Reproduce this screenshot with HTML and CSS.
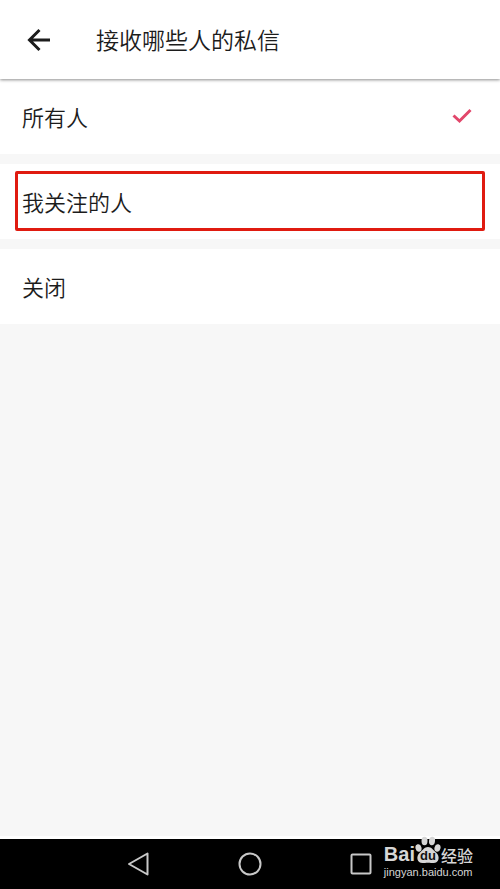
FILE: index.html
```html
<!DOCTYPE html>
<html lang="zh-CN">
<head>
<meta charset="utf-8">
<meta name="viewport" content="width=device-width, initial-scale=1">
<title>接收哪些人的私信</title>
<link rel="stylesheet" href="styles.css">
</head>
<body>
<header class="bar">
  <button class="back" type="button" aria-label="返回">
    <svg width="24" height="24" viewBox="0 0 24 24"><path d="M23 12H3M12.500 2L2.500 12l10 10" /></svg>
  </button>
  <h1 class="title">接收哪些人的私信</h1>
</header>
<main class="options">
  <label class="row"><input class="choice" type="radio" name="who" checked><span>所有人</span>
    <svg class="tick" width="20" height="16" viewBox="0 0 20 16"><path d="M1.500 7.500l6 5.500L18.500 2" /></svg>
  </label>
  <label class="row marked"><input class="choice" type="radio" name="who"><span>我关注的人</span></label>
  <label class="row"><input class="choice" type="radio" name="who"><span>关闭</span></label>
</main>
<footer class="nav">
  <button class="key" type="button" aria-label="后退">
    <svg width="24" height="24" viewBox="0 0 24 24"><path d="M20.500 1.500v21L2 12z" /></svg>
  </button>
  <button class="key" type="button" aria-label="主页">
    <svg width="24" height="24" viewBox="0 0 24 24"><circle cx="12" cy="12" r="10.500" /></svg>
  </button>
  <button class="key" type="button" aria-label="最近任务">
    <svg width="24" height="24" viewBox="0 0 24 24"><rect x="2.500" y="2.500" width="19" height="19" rx="1" /></svg>
  </button>
  <div class="brand">
    <div class="logo">
      <span class="bai">Bai</span>
      <span class="paw">
        <svg width="26" height="28" viewBox="0 0 26 28">
          <ellipse cx="3.500" cy="12" rx="3" ry="3.800" transform="rotate(-15 3.500 12)" />
          <ellipse cx="9.500" cy="5" rx="3" ry="4.200" />
          <ellipse cx="17" cy="5" rx="3" ry="4.200" transform="rotate(8 17 5)" />
          <ellipse cx="22.500" cy="12" rx="3" ry="3.800" transform="rotate(15 22.500 12)" />
          <path d="M13 11c-3.500 0-5 3-8 5.500-4.500 4-3 10.500 2.500 10.500 2 0 3-.3 5.500-.3s3.500.3 5.500.3c5.500 0 7-6.500 2.500-10.500-3-2.500-4.500-5.500-8-5.500z" />
        </svg>
        <span class="du">du</span>
      </span>
      <span class="jingyan">经验</span>
    </div>
    <div class="site">jingyan.baidu.com</div>
  </div>
</footer>
</body>
</html>
```
FILE: styles.css
```css
* {
  box-sizing: border-box;
}

body {
  margin: 0;
  min-height: 100vh;
  display: flex;
  flex-direction: column;
  background: #f7f7f7;
  color: #1c1c1c;
  font-family: "Noto Sans CJK SC", sans-serif;
  font-weight: 350;
}

button {
  padding: 0;
  border: 0;
  background: none;
}

svg {
  display: block;
  fill: none;
}

.bar {
  position: relative;
  z-index: 1;
  display: flex;
  align-items: center;
  gap: 45px;
  height: 79px;
  padding: 0 27px;
  background: #fff;
  box-shadow: 0 1px 3px rgba(0, 0, 0, 0.45);
}

.back svg {
  stroke: #1c1c1c;
  stroke-width: 3;
}

.title {
  margin: 0;
  padding-bottom: 2px;
  font-size: 23px;
  line-height: 32px;
  font-weight: 350;
}

.options {
  flex: 1;
  display: flex;
  flex-direction: column;
  gap: 10px;
  border-bottom: 3px solid #fff;
}

.row {
  position: relative;
  display: flex;
  align-items: center;
  justify-content: space-between;
  height: 75px;
  padding: 0 28px 2px 22px;
  background: #fff;
  font-size: 22px;
  line-height: 32px;
}

.choice {
  position: absolute;
  opacity: 0;
}

.tick {
  stroke: #e2476b;
  stroke-width: 3;
}

.marked::after {
  content: "";
  position: absolute;
  inset: 7px 15px 8px;
  border: 3px solid #e01b10;
  border-radius: 2px;
}

.nav {
  position: relative;
  display: flex;
  justify-content: center;
  align-items: center;
  gap: 87px;
  height: 50px;
  background: #000;
}

.key svg {
  stroke: #c8c8c8;
  stroke-width: 2;
  stroke-linejoin: round;
}

.brand {
  position: absolute;
  right: 27px;
  bottom: 10px;
  color: #d6d6d6;
}

.logo {
  display: flex;
  align-items: flex-end;
  height: 28px;
  margin-bottom: 2px;
}

.bai {
  font: bold 20px/20px "Liberation Sans", sans-serif;
}

.paw {
  position: relative;
}

.paw svg {
  fill: #d6d6d6;
}

.du {
  position: absolute;
  inset: auto 0 1px;
  color: #111;
  font: bold 13px/14px "Liberation Sans", sans-serif;
  text-align: center;
}

.jingyan {
  font-size: 16px;
  line-height: 18px;
  font-weight: 500;
}

.site {
  font: 11px/13px "Liberation Sans", sans-serif;
}
```
